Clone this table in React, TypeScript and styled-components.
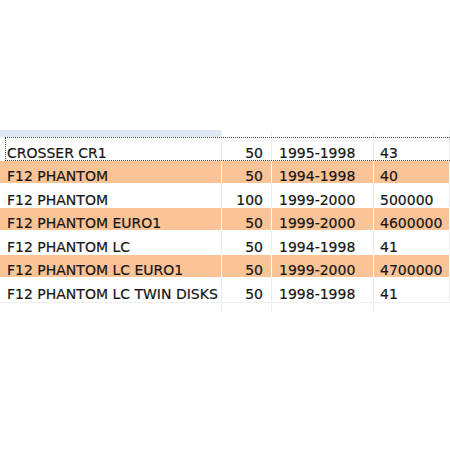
import React from 'react';
import styled, { createGlobalStyle } from 'styled-components';

// ===== DATA =====
const ROWS = [
  { name: 'CROSSER CR1', cc: '50', years: '1995-1998', code: '43' },
  { name: 'F12 PHANTOM', cc: '50', years: '1994-1998', code: '40' },
  { name: 'F12 PHANTOM', cc: '100', years: '1999-2000', code: '500000' },
  { name: 'F12 PHANTOM EURO1', cc: '50', years: '1999-2000', code: '4600000' },
  { name: 'F12 PHANTOM LC', cc: '50', years: '1994-1998', code: '41' },
  { name: 'F12 PHANTOM LC EURO1', cc: '50', years: '1999-2000', code: '4700000' },
  { name: 'F12 PHANTOM LC TWIN DISKS', cc: '50', years: '1998-1998', code: '41' },
];

const COLS = '222px 50px 102px 1fr';

// ===== GLOBAL =====
const GlobalStyle = createGlobalStyle`
  html, body {
    margin: 0;
    padding: 0;
    background: #ffffff;
  }
`;

// ===== STYLED COMPONENTS =====
const Page = styled.div`
  width: 450px;
  height: 450px;
  padding-top: 130px;
  box-sizing: border-box;
  font-family: "DejaVu Sans", Verdana, sans-serif;
  font-size: 14px;
  color: #161616;
`;

const Grid = styled.div`
  display: flex;
  flex-direction: column;
`;

const HeaderRow = styled.div`
  display: grid;
  grid-template-columns: ${COLS};
  height: 7px;
`;

const HeaderCell = styled.div<{ $selected?: boolean }>`
  background: ${p => (p.$selected ? '#dfe8f4' : '#ffffff')};
  border-right: 1px solid #eef0f3;
`;

const Row = styled.div<{ $focused?: boolean }>`
  position: relative;
  display: grid;
  grid-template-columns: ${COLS};
  height: 23.5px;
  background: #ffffff;

  ${p => p.$focused && `
    &::after {
      content: '';
      position: absolute;
      left: 5px;
      right: 0;
      top: 0;
      bottom: 0;
      border: 1px dotted #444;
      border-right: none;
      pointer-events: none;
    }
  `}
`;

const Cell = styled.div<{ $alt: boolean; $align?: 'left' | 'right'; $pad: string }>`
  display: flex;
  align-items: center;
  justify-content: ${p => (p.$align === 'right' ? 'flex-end' : 'flex-start')};
  padding: ${p => p.$pad};
  padding-top: 9px;
  background: ${p => (p.$alt ? '#fbc497' : '#ffffff')};
  border-right: 1px solid ${p => (p.$alt ? '#ffffff' : '#ebebeb')};
  border-bottom: 1px solid #ffffff;
  white-space: nowrap;
  overflow: hidden;
  line-height: 1;
  -webkit-text-stroke: 0.2px #161616;
`;

const FillerRow = styled.div`
  display: grid;
  grid-template-columns: ${COLS};
  height: 10px;
  border-top: 1px solid #f0f0f0;
`;

const FillerCell = styled.div`
  border-right: 1px solid #f0f0f0;
`;

// ===== APP =====
export default function App() {
  return (
    <Page>
      <GlobalStyle />
      <Grid>
        <HeaderRow>
          <HeaderCell $selected />
          <HeaderCell />
          <HeaderCell />
          <HeaderCell />
        </HeaderRow>
        {ROWS.map((r, i) => {
          const alt = i % 2 === 1;
          return (
            <Row key={i} $focused={i === 0}>
              <Cell $alt={alt} $pad="0 4px 0 7px">{r.name}</Cell>
              <Cell $alt={alt} $align="right" $pad="0 8px 0 0">{r.cc}</Cell>
              <Cell $alt={alt} $pad="0 0 0 7px">{r.years}</Cell>
              <Cell $alt={alt} $pad="0 0 0 6px">{r.code}</Cell>
            </Row>
          );
        })}
        <FillerRow>
          <FillerCell />
          <FillerCell />
          <FillerCell />
          <div />
        </FillerRow>
      </Grid>
    </Page>
  );
}
